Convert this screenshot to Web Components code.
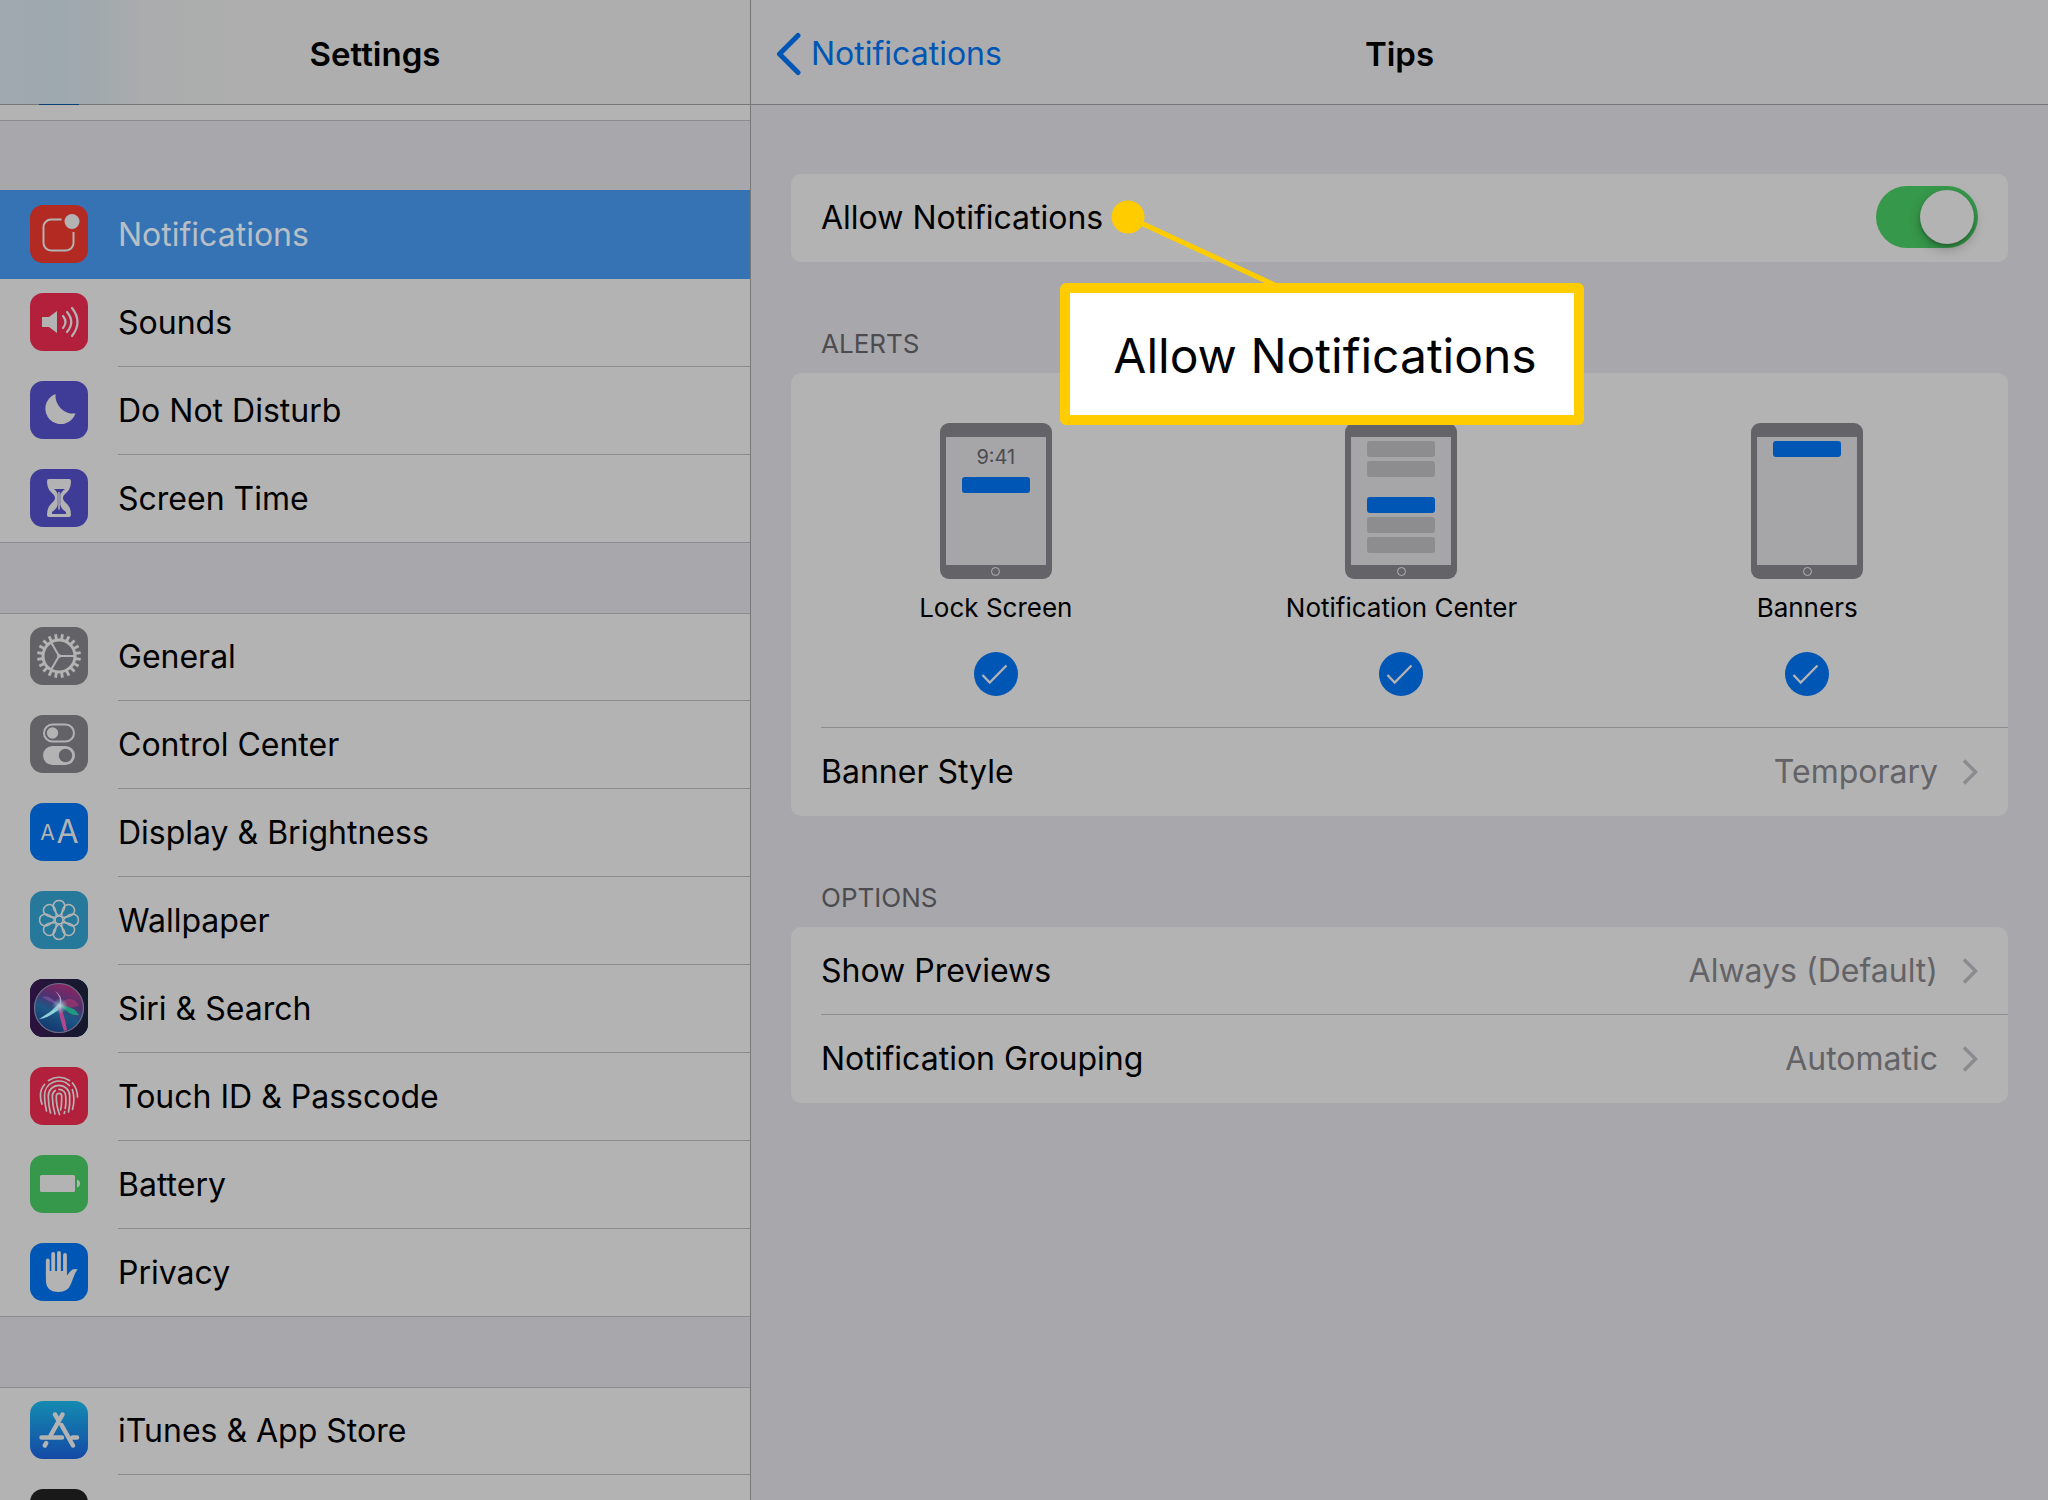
<!DOCTYPE html>
<html lang="en">
<head>
<meta charset="utf-8">
<meta name="viewport" content="width=device-width, initial-scale=1">
<title>Settings</title>
<style>
  :root {
    --canvas: #a8a8ac;
    --surface: #b3b3b3;
    --rule: #8c8b8f;
    --bar-rule: #77777a;
    --ink: #000;
    --muted: #636367;
    --blue: #0056b4;
    --text: 32px;
    --small: 26px;
  }
  body {
    margin: 0;
    background: var(--canvas);
    color: var(--ink);
    font-family: Inter, "Liberation Sans", sans-serif;
    font-size: var(--text);
    line-height: 40px;
  }
</style>
</head>
<body>
<settings-app>
  <nav-bar slot="side-bar" heading="Settings" tinted></nav-bar>
  <nav-group slot="side" peek></nav-group>
  <nav-group slot="side">
    <nav-row icon="notifications" selected>Notifications</nav-row>
    <nav-row icon="sounds">Sounds</nav-row>
    <nav-row icon="dnd">Do Not Disturb</nav-row>
    <nav-row icon="screentime">Screen Time</nav-row>
  </nav-group>
  <nav-group slot="side">
    <nav-row icon="general">General</nav-row>
    <nav-row icon="control">Control Center</nav-row>
    <nav-row icon="display">Display &amp; Brightness</nav-row>
    <nav-row icon="wallpaper">Wallpaper</nav-row>
    <nav-row icon="siri">Siri &amp; Search</nav-row>
    <nav-row icon="touchid">Touch ID &amp; Passcode</nav-row>
    <nav-row icon="battery">Battery</nav-row>
    <nav-row icon="privacy">Privacy</nav-row>
  </nav-group>
  <nav-group slot="side">
    <nav-row icon="appstore">iTunes &amp; App Store</nav-row>
    <nav-row icon="wallet"></nav-row>
  </nav-group>

  <nav-bar slot="main-bar" heading="Tips" back="Notifications"></nav-bar>
  <pref-card>
    <toggle-row>Allow Notifications</toggle-row>
    <call-out slot="over">Allow Notifications</call-out>
  </pref-card>
  <pref-card heading="ALERTS">
    <alert-styles>
      <alert-option kind="lock">Lock Screen</alert-option>
      <alert-option kind="center">Notification Center</alert-option>
      <alert-option kind="banner">Banners</alert-option>
    </alert-styles>
    <pref-row value="Temporary">Banner Style</pref-row>
  </pref-card>
  <pref-card heading="OPTIONS">
    <pref-row value="Always (Default)">Show Previews</pref-row>
    <pref-row value="Automatic">Notification Grouping</pref-row>
  </pref-card>
</settings-app>

<script>
const base = '*{box-sizing:border-box}';
function define(name, css, render) {
  customElements.define(name, class extends HTMLElement {
    connectedCallback() {
      if (this.shadowRoot) return;
      const root = this.attachShadow({ mode: 'open' });
      const t = document.createElement('template');
      t.innerHTML = `<style>${base}${css}</style>${render(this)}`;
      root.append(t.content.cloneNode(true));
    }
  });
}

const W = '#b3b3b3';
const around = (n, f) => Array.from({ length: n }, (_, i) => f(i * 360 / n)).join('');
const icons = {
  notifications: ['#b32a23', `<path d="M31.5 14.5H21a7.5 7.5 0 0 0-7.5 7.5v16a7.5 7.5 0 0 0 7.5 7.5h15a7.5 7.5 0 0 0 7.5-7.5V27" fill="none" stroke="${W}" stroke-width="2"/><circle cx="42" cy="16.500" r="7.500" fill="${W}"/>`],
  sounds: ['#b3203c', `<path d="M12 24h7l8-6v22l-8-6h-7z" fill="${W}"/><path d="M33 23q5 6 0 12M37 19q8.500 10 0 20M42 15q11 14 0 28" fill="none" stroke="${W}" stroke-width="2.200" stroke-linecap="round"/>`],
  dnd: ['#3e3c96', `<path d="M25.500 13A15.500 15.500 0 1 0 45.500 32.500 18 18 0 0 1 25.500 13z" fill="${W}"/>`],
  screentime: ['#3e3c96', `<path d="M19 10h20q2 0 2 2 0 7-3.500 10.500C34 26 33 27 33 29s1 3 4.500 6.500Q41 39 41 46q0 2-2 2H19q-2 0-2-2 0-7 3.500-10.500C24 32 25 31 25 29s-1-3-4.500-6.500Q17 19 17 12q0-2 2-2z" fill="${W}"/><path d="M24 20h11q-3 2-4.700 5v11q1 4 5.700 7v2H22v-2q4.700-3 5.700-7V25Q27 22 24 20z" fill="#3e3c96"/><path d="M29 23v20" stroke="${W}" stroke-width="1.500"/><path d="M22 45q1-3 7-4.500Q35 42 36 45z" fill="#3e3c96"/>`],
  general: ['#636367', `<g fill="none" stroke="${W}"><circle cx="29" cy="29" r="16" stroke-width="3"/>${around(20, a => `<path d="M29 13V7" stroke-width="2.800" transform="rotate(${a + 9} 29 29)"/>`)}<path d="M29 29h15M29 29l-7.500-13M29 29l-7.500 13" stroke-width="2"/></g><circle cx="29" cy="29" r="2" fill="${W}"/>`],
  control: ['#636367', `<rect x="14" y="9.500" width="30" height="17" rx="8.500" fill="none" stroke="${W}" stroke-width="2"/><circle cx="22.500" cy="18" r="5.700" fill="${W}"/><rect x="13" y="31" width="32" height="19" rx="9.500" fill="${W}"/><circle cx="35.500" cy="40.500" r="6.700" fill="#636367"/>`],
  display: ['#0056b4', `<g fill="${W}" font-family="Inter, sans-serif" text-anchor="middle"><text x="17.500" y="37" font-size="21">A</text><text x="37.500" y="40" font-size="32">A</text></g>`],
  wallpaper: ['#27799c', `<g fill="none" stroke="${W}" stroke-width="1.500" stroke-linejoin="round">${around(8, a => `<path d="M29 25Q22 18.500 23.300 14A5.900 5.900 0 0 1 34.700 14Q36 18.500 29 25z" transform="rotate(${a} 29 29)"/>`)}<circle cx="29" cy="29" r="4"/></g>`],
  siri: ['#151630', `<defs><linearGradient id="s" x1=".7" y1="0" x2=".3" y2="1"><stop offset="0" stop-color="#8f2560"/><stop offset=".35" stop-color="#52306f"/><stop offset=".6" stop-color="#1d5785"/><stop offset="1" stop-color="#12336c"/></linearGradient><radialGradient id="c"><stop offset="0" stop-color="#c4d8e0"/><stop offset="1" stop-color="#6ab5c4" stop-opacity="0"/></radialGradient><linearGradient id="b" x2="1"><stop offset="0" stop-color="#2c123f"/><stop offset="1" stop-color="#121a2c"/></linearGradient></defs><rect width="58" height="58" fill="url(#b)"/><circle cx="29" cy="29" r="24.500" fill="url(#s)" stroke="#6f7289" stroke-width="1.200"/><path d="M29 27q10-14 20-1-6 5-20 1z" fill="#b53a6c" opacity=".55"/><path d="M29 27Q15 20 12 18q8-3 17 9z" fill="#8a5ab0" opacity=".6"/><path d="M30 26q15 2 19 10-8 2-19-10z" fill="#1f9a7c"/><path d="M29 25Q20 34 9 40q8 0 22-11z" fill="#8fd0da"/><path d="M28 27q2 14 6 25l3-1q-2-14-7-24z" fill="#b0468c"/><path d="M29 27q3-9-4-15 8 4 6 15z" fill="#b49ac8"/><circle cx="30" cy="27" r="8" fill="url(#c)"/>`],
  touchid: ['#b3203c', `<g fill="none" stroke="${W}" stroke-width="1.700" stroke-linecap="round"><path d="M18.500 13.500Q29 7 39.500 13.500M14.500 17.500Q10 23 10.500 29q0 5 1.500 8M42.500 16Q47.500 22 47.500 30"/><path d="M16.500 44Q14.500 36 14.500 28.500a14.500 14.500 0 0 1 25-10M42.300 22.500Q45.500 32 42.500 42.500"/><path d="M20.500 46Q18.300 38 18.300 29a10.700 10.700 0 0 1 21.400 0Q40.200 38 38.500 45"/><path d="M25 47Q22.300 38 22.300 29a6.700 6.700 0 0 1 3-5.500M29 22.300a6.700 6.700 0 0 1 6.700 6.700q.5 8-.5 12.500M34.700 44.500l-.5 2"/><path d="M29.500 47.500Q26 38 26.300 29a2.700 2.700 0 0 1 5.400 0q0 11-1.200 14"/></g>`],
  battery: ['#36984a', `<rect x="10" y="20" width="35" height="17" rx="1.500" fill="${W}"/><path d="M47 24.500q3 1 3 4t-3 4z" fill="${W}"/>`],
  privacy: ['#0056b4', `<path d="M17.800 17.500V32M23.200 11v20M29 10v20M35 12v19" stroke="${W}" stroke-width="3.800" stroke-linecap="round" fill="none"/><path d="M15.900 28V37q0 12 12.500 12 9.500 0 12.500-8l3.500-9q1-3 3.300-5.500-4.500-1.500-7.500 2L36.900 32.500V28z" fill="${W}"/>`],
  appstore: ['linear-gradient(#158bb1,#1449a6)', `<g fill="none" stroke="${W}" stroke-width="4.500" stroke-linecap="round"><path d="M32.500 13.500 20 35.500M25 13.500l3 5M31.500 24 43 44.500M11.500 36.500H32M42.500 36.500H47M16.200 42.200l-1.400 2.300"/></g>`],
  wallet: ['#19191a', '']
};

define('icon-tile', `
  :host{display:block;width:58px;height:58px;flex:none;border-radius:13px;overflow:hidden}
  svg{display:block;width:58px;height:58px}`,
  el => {
    const [bg, art] = icons[el.getAttribute('name')];
    return `<style>:host{background:${bg}}</style><svg viewBox="0 0 58 58" aria-hidden="true">${art}</svg>`;
  });

define('settings-app', `
  :host{display:grid;grid-template-columns:minmax(0,751fr) minmax(0,1297fr);min-height:100vh}
  aside{height:100vh;overflow:hidden;border-right:1px solid var(--bar-rule)}
  nav{display:flex;flex-direction:column;gap:70px}
  section{padding:69px 40px 0}`,
  () => `<aside><slot name="side-bar"></slot><nav><slot name="side"></slot></nav></aside>
    <main><slot name="main-bar"></slot><section><slot></slot></section></main>`);

define('nav-bar', `
  :host{display:block}
  header{display:grid;grid-template-columns:1fr auto 1fr;align-items:center;height:105px;padding:4px 24px 0;background:#adadaf;border-bottom:1px solid var(--bar-rule)}
  header.tinted{background:linear-gradient(90deg,#a1a9b0 0,#9da8ae 60px,#a4aaad 110px,#abacad 150px,#aeaeae 260px)}
  h1{margin:0;font-size:33px;font-weight:600;grid-column:2}
  a{display:flex;align-items:center;gap:10px;color:var(--blue);text-decoration:none;justify-self:start;grid-row:1}
  svg{display:block}`,
  el => `<header class="${el.hasAttribute('tinted') ? 'tinted' : ''}">
    ${el.hasAttribute('back') ? `<a href="#back"><svg width="26" height="44" viewBox="0 0 26 44" fill="none" stroke="currentColor" stroke-width="5" stroke-linecap="round" stroke-linejoin="round" aria-hidden="true"><path d="M23 3.500 4.500 22 23 40.500"/></svg>${el.getAttribute('back')}</a>` : ''}
    <h1>${el.getAttribute('heading')}</h1></header>`);

define('nav-group', `
  :host{display:block;background:var(--surface);box-shadow:inset 0 1px var(--rule),inset 0 -1px var(--rule)}
  :host([peek]){height:16px;box-shadow:inset 0 -1px var(--rule);position:relative}
  i{position:absolute;left:39px;top:-1px;width:40px;height:1px;background:#0b4074}`,
  el => el.hasAttribute('peek') ? '<i></i>' : '<slot></slot>');

define('nav-row', `
  :host{display:block}
  a{display:flex;align-items:center;gap:30px;height:88px;padding-left:30px;color:inherit;text-decoration:none}
  icon-tile{margin-bottom:2px}
  span{flex:1;display:flex;align-items:center;height:88px;border-bottom:1px solid var(--rule)}
  :host(:last-child) span{border-color:transparent}
  :host([selected]) a{background:#3673b5;color:#b8bfc6;box-shadow:0 -1px #3673b5}
  :host([selected]) span{border-color:transparent}`,
  el => `<a href="#${el.getAttribute('icon')}"${el.hasAttribute('selected') ? ' aria-current="page"' : ''}><icon-tile name="${el.getAttribute('icon')}"></icon-tile><span><slot></slot></span></a>`);

define('pref-card', `
  :host{display:block;position:relative}
  h2{margin:0;padding:66px 30px 13px;font-size:var(--small);line-height:32px;font-weight:400;color:#4c4c50}
  div{background:var(--surface);border-radius:10px}`,
  el => `${el.hasAttribute('heading') ? `<h2>${el.getAttribute('heading')}</h2>` : ''}<div><slot></slot></div><slot name="over"></slot>`);

define('toggle-row', `
  :host{display:block}
  label{display:flex;align-items:center;justify-content:space-between;height:88px;padding:0 30px}
  input{appearance:none;margin:0 0 2px;width:102px;height:62px;border-radius:31px;background:#36984a;display:flex;justify-content:flex-end;padding:4px}
  input::before{content:"";width:54px;height:54px;border-radius:50%;background:var(--surface);box-shadow:0 5px 12px rgba(0,0,0,.25),0 2px 3px rgba(0,0,0,.2)}
  input:not(:checked){background:#8c8b8f;justify-content:flex-start}`,
  () => `<label><span><slot></slot></span><input type="checkbox" role="switch" checked></label>`);

define('pref-row', `
  :host{display:block;padding-left:30px}
  button{all:unset;box-sizing:border-box;display:flex;align-items:center;width:100%;height:88px;padding-right:30px;cursor:pointer}
  :host(:not(:last-child)) button{border-bottom:1px solid var(--rule)}
  .label{flex:1}
  .value{color:var(--muted);margin-right:24px}`,
  el => `<button type="button"><span class="label"><slot></slot></span><span class="value">${el.getAttribute('value')}</span>
    <svg width="16" height="26" viewBox="0 0 16 26" fill="none" stroke="#8b8b8f" stroke-width="3.500" aria-hidden="true"><path d="M2 1.500 13.500 13 2 24.500"/></svg></button>`);

define('alert-styles', `
  :host{display:block;padding-left:30px}
  div{display:grid;grid-template-columns:repeat(3,minmax(0,1fr));margin:0 -2px 0 -28px;padding:50px 0 31px}
  hr{margin:0;border:0;height:1px;background:var(--rule)}`,
  () => `<div><slot></slot></div><hr>`);

define('alert-option', `
  :host{display:block;font-size:var(--small);line-height:32px}
  label{display:flex;flex-direction:column;align-items:center}
  .phone{display:flex;flex-direction:column;align-items:center;width:112px;height:156px;padding:14px 6px 3px;border-radius:9px;background:#646468;margin-bottom:13px}
  .screen{display:flex;flex-direction:column;align-items:center;gap:4px;width:100%;height:128px;padding-top:4px;background:#a6a6a8}
  .screen time{font-size:20px;line-height:24px;margin:4px 0;color:#4c4c50}
  b{width:68px;height:16px;border-radius:3px;background:#8d8d8f;flex:none}
  b.on{background:var(--blue)}
  b.far{margin-top:16px}
  .home{width:9px;height:9px;border:1px solid var(--surface);border-radius:50%;margin-top:2px}
  .check{display:grid;margin-top:28px;height:44px}
  .check > *{grid-area:1/1}
  input{appearance:none;margin:0;width:44px;height:44px;border-radius:50%;background:#8d8d8f}
  input:checked{background:var(--blue)}
  svg{pointer-events:none}`,
  el => {
    const art = {
      lock: '<time>9:41</time><b class="on"></b>',
      center: '<b></b><b></b><b class="on far"></b><b></b><b></b>',
      banner: '<b class="on"></b>'
    }[el.getAttribute('kind')];
    return `<label><span class="phone"><span class="screen">${art}</span><span class="home"></span></span><slot></slot>
      <span class="check"><input type="checkbox" checked><svg width="44" height="44" viewBox="0 0 44 44" fill="none" stroke="${W}" stroke-width="2.300" aria-hidden="true"><path d="M8.500 23 15.700 30.500 32.500 13.500"/></svg></span></label>`;
  });

define('call-out', `
  :host{position:absolute;z-index:2;left:320px;top:26px;pointer-events:none}
  svg{display:block;width:170px;height:90px}
  p{box-sizing:border-box;position:absolute;left:-51px;top:83px;margin:0;padding:4px 0 0 6px;width:524px;height:142px;border:10px solid #fc0;border-radius:6px;background:#fff;font-size:48px;line-height:118px;text-align:center;white-space:nowrap}`,
  () => `<svg viewBox="0 0 170 90" aria-hidden="true"><circle cx="17" cy="17" r="16.500" fill="#fc0"/><path d="M17 17 166 86" stroke="#fc0" stroke-width="5"/></svg><p><slot></slot></p>`);
</script>
</body>
</html>
